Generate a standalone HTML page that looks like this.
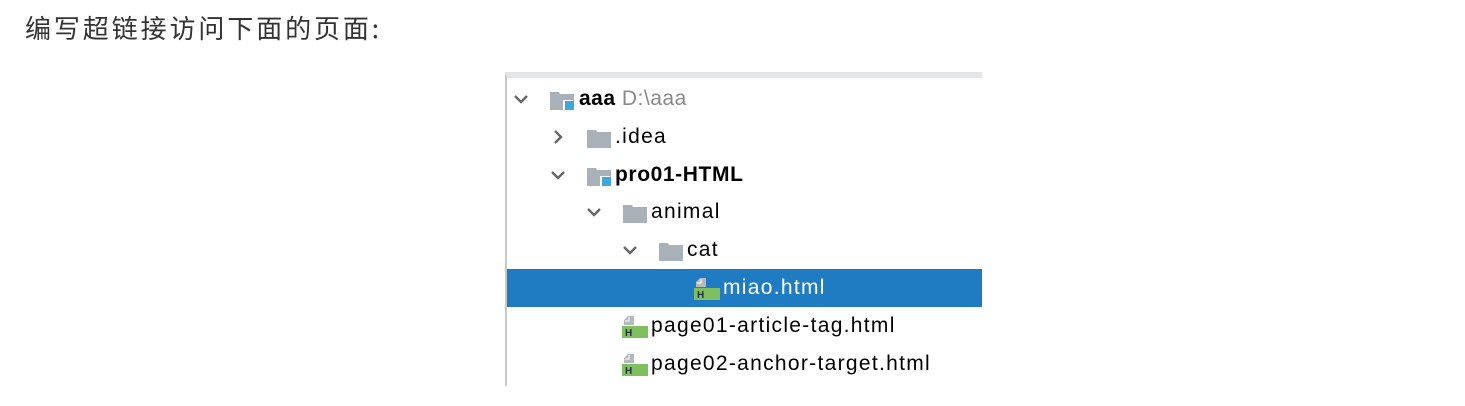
<!DOCTYPE html>
<html><head><meta charset="utf-8"><style>
body{margin:0;width:1465px;height:406px;background:#fff;position:relative;overflow:hidden;font-family:"Liberation Sans","Noto Sans CJK SC",sans-serif}
.h{position:absolute;left:25px;top:10px;font-size:26px;letter-spacing:2.9px;color:#333;font-family:"Noto Sans CJK SC",sans-serif;line-height:36px}
.panel{position:absolute;left:505px;top:72px;width:477px;height:314px;border-left:2px solid #c8c8c8;border-top:6px solid #e3e5e8;box-sizing:border-box}
.r{position:absolute;left:0;height:38px;width:475px;font-size:21px;letter-spacing:1.3px;color:#000;line-height:38px}
.sel{background:#1f7cc3;color:#fff}
.t{position:absolute;top:0;white-space:nowrap}
.chev{position:absolute;top:10px;width:18px;height:18px}
.fold{position:absolute;top:11px;width:26px;height:19px}
.file{position:absolute;top:8px;width:26px;height:24px}
</style></head><body>
<div class="h">编写超链接访问下面的页面:</div>
<div class="panel">
<svg width="0" height="0" style="position:absolute"><defs>
<symbol id="down" viewBox="0 0 18 18"><path d="M3 6l6 6 6-6" fill="none" stroke="#666" stroke-width="2.4"/></symbol>
<symbol id="right" viewBox="0 0 18 18"><path d="M6 3l6 6-6 6" fill="none" stroke="#666" stroke-width="2.4"/></symbol>
<symbol id="fd" viewBox="0 0 26 19"><path d="M1 1h9l1 2h14v16H1z" fill="#a9b1b8"/></symbol>
<symbol id="fdm" viewBox="0 0 26 19"><path d="M1 1h9l1 2h14v16H1z" fill="#a9b1b8"/><rect x="14" y="9" width="10" height="10" fill="#fff"/><rect x="16" y="10" width="9" height="9" fill="#3ea8dc"/></symbol>
<symbol id="hf" viewBox="0 0 26 24"><path d="M6 1h6v9H2V5z" fill="#b4b9be"/><path d="M7 2v4H3" fill="none" stroke="#fff" stroke-width="1"/><rect x="0" y="11" width="26" height="12" fill="#7fbf60"/><text x="3" y="21" font-size="10" font-weight="bold" fill="#234" font-family="Liberation Sans">H</text></symbol>
</defs></svg>
<div class="r" style="top:2px"><svg class="chev" style="left:5px"><use href="#down"/></svg><svg class="fold" style="left:42px"><use href="#fdm"/></svg><span class="t" style="left:72px;letter-spacing:0.5px"><b>aaa</b> <span style="color:#888">D:\aaa</span></span></div>
<div class="r" style="top:40px"><svg class="chev" style="left:42px"><use href="#right"/></svg><svg class="fold" style="left:79px"><use href="#fd"/></svg><span class="t" style="left:108px">.idea</span></div>
<div class="r" style="top:78px"><svg class="chev" style="left:42px"><use href="#down"/></svg><svg class="fold" style="left:79px"><use href="#fdm"/></svg><span class="t" style="left:108px;letter-spacing:0.6px"><b>pro01-HTML</b></span></div>
<div class="r" style="top:115px"><svg class="chev" style="left:78px"><use href="#down"/></svg><svg class="fold" style="left:115px"><use href="#fd"/></svg><span class="t" style="left:144px">animal</span></div>
<div class="r" style="top:153px"><svg class="chev" style="left:114px"><use href="#down"/></svg><svg class="fold" style="left:151px"><use href="#fd"/></svg><span class="t" style="left:180px">cat</span></div>
<div class="r sel" style="top:191px"><svg class="file" style="left:187px"><use href="#hf"/></svg><span class="t" style="left:216px">miao.html</span></div>
<div class="r" style="top:229px"><svg class="file" style="left:115px"><use href="#hf"/></svg><span class="t" style="left:144px">page01-article-tag.html</span></div>
<div class="r" style="top:267px"><svg class="file" style="left:115px"><use href="#hf"/></svg><span class="t" style="left:144px">page02-anchor-target.html</span></div>
</div>
</body></html>
